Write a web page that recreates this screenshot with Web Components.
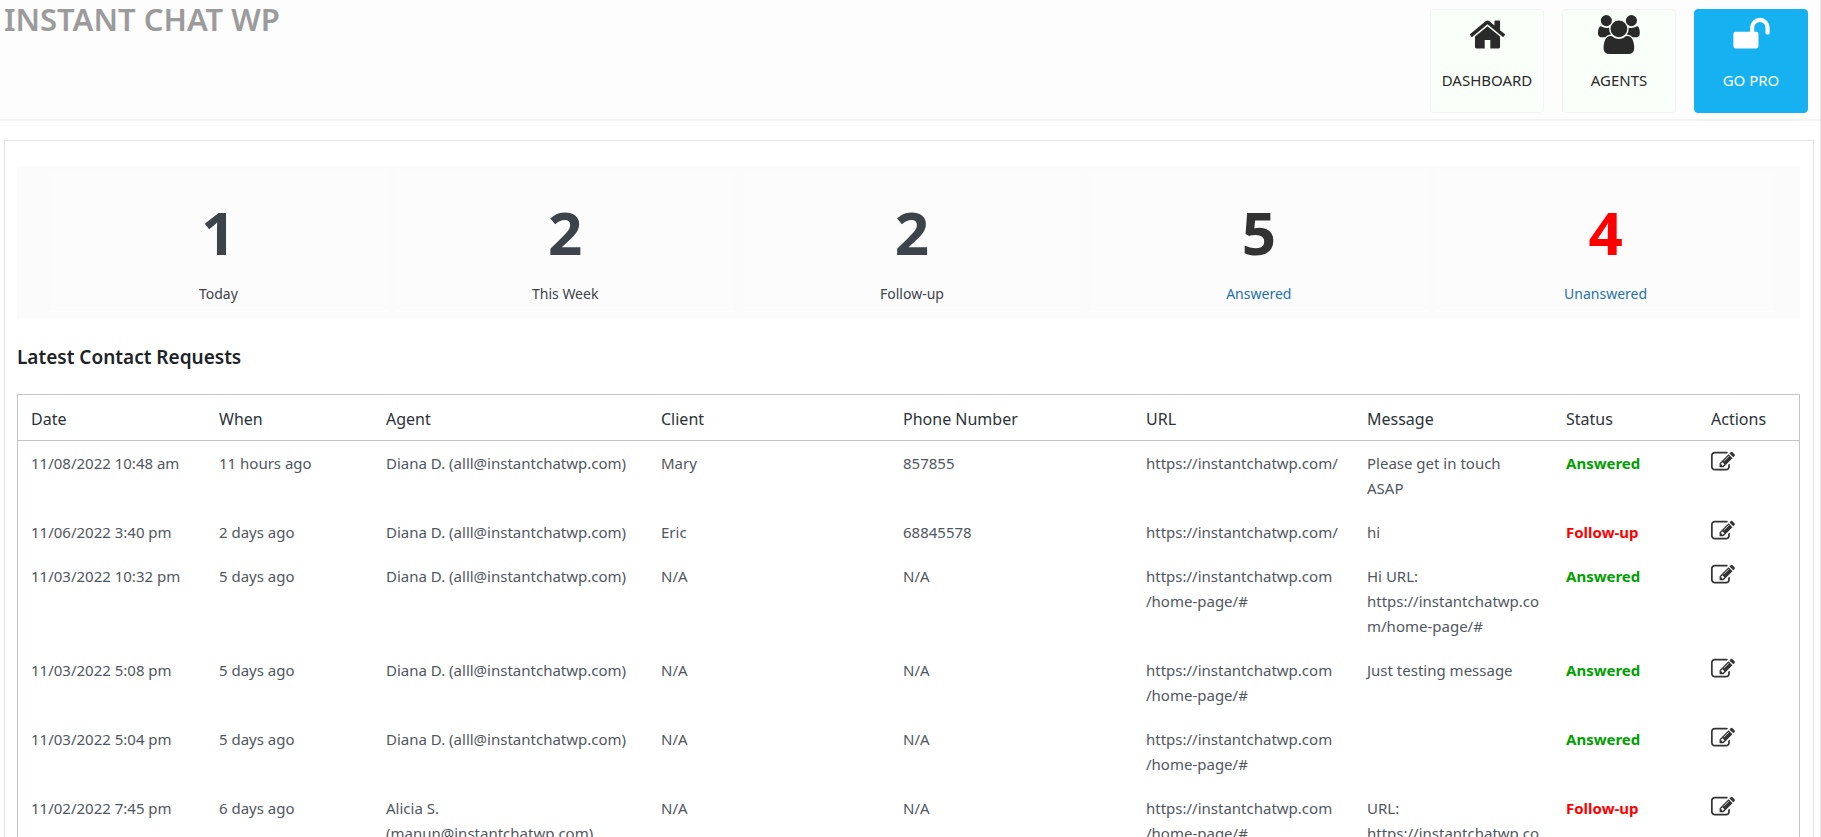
<!DOCTYPE html>
<html lang="en">
<head>
<meta charset="utf-8">
<title>Instant Chat WP</title>
<style>
    body {
        margin: 0;
        background: #fff;
        font-family: "Noto Sans", "Open Sans", sans-serif;
        font-size: 15px;
        color: #50575e;
    }
</style>
</head>
<body>
<chat-page>
    <chat-header slot="header" brand="INSTANT CHAT WP">
        <chat-nav-item icon="home">DASHBOARD</chat-nav-item>
        <chat-nav-item icon="users">AGENTS</chat-nav-item>
        <chat-nav-item icon="unlock" pro>GO PRO</chat-nav-item>
    </chat-header>
    <chat-stats>
        <chat-stat value="1">Today</chat-stat>
        <chat-stat value="2">This Week</chat-stat>
        <chat-stat value="2">Follow-up</chat-stat>
        <chat-stat value="5" link>Answered</chat-stat>
        <chat-stat value="4" link alert>Unanswered</chat-stat>
    </chat-stats>
    <chat-requests heading="Latest Contact Requests"></chat-requests>
</chat-page>

<script>
"use strict";

// icon outlines, each drawn on a 1792 unit high grid
const icons = {
    home: {
        width: 1792,
        path: "M1472 992v480q0 26-19 45t-45 19h-384v-384h-256v384h-384q-26 0-45-19t-19-45v-480q0-1 .5-3t.5-3l575-474 575 474q1 2 1 6zm223-69l-62 74q-8 9-21 11h-3q-13 0-21-7l-692-577-692 577q-12 8-24 7-13-2-21-11l-62-74q-8-10-7-23.5t11-21.5l719-599q32-26 76-26t76 26l244 204v-195q0-14 9-23t23-9h192q14 0 23 9t9 23v408l219 182q10 8 11 21.5t-7 23.5z"
    },
    users: {
        width: 1920,
        path: "M593 896q-162 5-265 128h-134q-82 0-138-40.5t-56-118.5q0-353 124-353 6 0 43.5 21t97.5 42.5 119 21.5q67 0 133-23-5 37-5 66 0 139 81 256zm1071 637q0 120-73 189.5t-194 69.5h-874q-121 0-194-69.5t-73-189.5q0-53 3.5-103.5t14-109 26.5-108.5 43-97.5 62-81 85.5-53.5 111.5-20q10 0 43 21.5t73 48 107 48 135 21.5 135-21.5 107-48 73-48 43-21.5q61 0 111.5 20t85.5 53.5 62 81 43 97.5 26.5 108.5 14 109 3.5 103.5zm-1024-1277q0 106-75 181t-181 75-181-75-75-181 75-181 181-75 181 75 75 181zm704 384q0 159-112.5 271.5t-271.5 112.5-271.5-112.5-112.5-271.5 112.5-271.5 271.5-112.5 271.5 112.5 112.5 271.5zm576 225q0 78-56 118.5t-138 40.5h-134q-103-123-265-128 81-117 81-256 0-29-5-66 66 23 133 23 59 0 119-21.5t97.5-42.5 43.5-21q124 0 124 353zm-128-609q0 106-75 181t-181 75-181-75-75-181 75-181 181-75 181 75 75 181z"
    },
    unlock: {
        width: 1792,
        path: "M1728 576v256q0 26-19 45t-45 19h-64q-26 0-45-19t-19-45v-256q0-106-75-181t-181-75-181 75-75 181v192h96q40 0 68 28t28 68v576q0 40-28 68t-68 28h-960q-40 0-68-28t-28-68v-576q0-40 28-68t68-28h672v-192q0-185 131.5-316.5t316.5-131.5 316.5 131.5 131.5 316.5z"
    },
    edit: {
        width: 1792,
        path: "M888 1184l116-116-152-152-116 116v56h96v96h56zm440-720q-16-16-33 1l-350 350q-17 17-1 33t33-1l350-350q17-17 1-33zm80 594v190q0 119-84.5 203.5t-203.5 84.5h-832q-119 0-203.5-84.5t-84.5-203.5v-832q0-119 84.5-203.5t203.5-84.5h832q63 0 117 25 15 7 18 23 3 17-9 29l-49 49q-14 14-32 8-23-6-45-6h-832q-66 0-113 47t-47 113v832q0 66 47 113t113 47h832q66 0 113-47t47-113v-126q0-13 9-22l64-64q15-15 35-7t20 29zm-96-738l288 288-672 672h-288v-288zm444 132l-92 92-288-288 92-92q28-28 68-28t68 28l152 152q28 28 28 68t-28 68z"
    }
};

function icon(name) {
    const { width, path } = icons[name];
    return `<svg viewBox="0 0 ${width} 1792" fill="currentColor" aria-hidden="true"><path d="${path}"/></svg>`;
}

const agent = "Diana D. (alll@instantchatwp.com)";
const site = "https://instantchatwp.com/";
const homePage = "https://instantchatwp.com\n/home-page/#";
const wrappedUrl = "https://instantchatwp.co\nm/home-page/#";

// column name and its share of the table width
const columns = [
    ["Date", 188],
    ["When", 167],
    ["Agent", 275],
    ["Client", 242],
    ["Phone Number", 243],
    ["URL", 221],
    ["Message", 199],
    ["Status", 145],
    ["Actions", 101]
];

const requests = [
    ["11/08/2022 10:48 am", "11 hours ago", agent, "Mary", "857855", site, "Please get in touch\nASAP", "Answered"],
    ["11/06/2022 3:40 pm", "2 days ago", agent, "Eric", "68845578", site, "hi", "Follow-up"],
    ["11/03/2022 10:32 pm", "5 days ago", agent, "N/A", "N/A", homePage, "Hi URL:\n" + wrappedUrl, "Answered"],
    ["11/03/2022 5:08 pm", "5 days ago", agent, "N/A", "N/A", homePage, "Just testing message", "Answered"],
    ["11/03/2022 5:04 pm", "5 days ago", agent, "N/A", "N/A", homePage, "", "Answered"],
    ["11/02/2022 7:45 pm", "6 days ago", "Alicia S.\n(manun@instantchatwp.com)", "N/A", "N/A", homePage, "URL:\n" + wrappedUrl, "Follow-up"]
];

/**
 * The page frame: the header on top, everything else in the bordered panel.
 */
class ChatPage extends HTMLElement {
    constructor() {
        super();
        this.attachShadow({ mode: "open" });
        this.shadowRoot.innerHTML = `
            <style>
                :host {
                    display: flex;
                    flex-direction: column;
                    box-sizing: border-box;
                    height: 100vh;
                    overflow: auto;
                    scrollbar-width: none;
                    border-right: 1px solid #ececec;
                }
                main {
                    flex: 1 0 auto;
                    margin: 19px 6px 0 4px;
                    padding: 25px 13px 0 12px;
                    border: 1px solid #e3e3e3;
                    border-bottom: 0;
                }
            </style>
            <slot name="header"></slot>
            <main><slot></slot></main>
        `;
    }
}
customElements.define("chat-page", ChatPage);

class ChatHeader extends HTMLElement {
    constructor() {
        super();
        this.attachShadow({ mode: "open" });
        this.shadowRoot.innerHTML = `
            <style>
                :host {
                    display: block;
                }
                header {
                    display: flex;
                    justify-content: space-between;
                    padding: 9px 12px 6px 4px;
                    background: #fdfdfd;
                    border-bottom: 2px solid #f2f2f2;
                }
                h1 {
                    margin: 0;
                    font-size: 31px;
                    font-weight: 600;
                    line-height: 20px;
                    color: #9b9b9b;
                }
                nav {
                    display: flex;
                    gap: 18px;
                }
            </style>
            <header>
                <h1></h1>
                <nav><slot></slot></nav>
            </header>
        `;
    }
    connectedCallback() {
        this.shadowRoot.querySelector("h1").textContent = this.getAttribute("brand");
    }
}
customElements.define("chat-header", ChatHeader);

class ChatNavItem extends HTMLElement {
    constructor() {
        super();
        this.attachShadow({ mode: "open" });
        this.shadowRoot.innerHTML = `
            <style>
                :host {
                    display: block;
                }
                a {
                    display: flex;
                    flex-direction: column;
                    align-items: center;
                    gap: 15px;
                    box-sizing: border-box;
                    width: 114px;
                    height: 104px;
                    padding-top: 5px;
                    border: 1px solid #f3f3f3;
                    border-radius: 4px;
                    background: #f9fff9;
                    color: #2a2a2a;
                    line-height: 22px;
                    text-decoration: none;
                }
                :host([pro]) a {
                    border-color: #16b1f0;
                    background: #16b1f0;
                    color: #fff;
                }
                svg {
                    height: 39px;
                }
            </style>
            <a href="#"><slot></slot></a>
        `;
    }
    connectedCallback() {
        this.shadowRoot.querySelector("a").insertAdjacentHTML("afterbegin", icon(this.getAttribute("icon")));
    }
}
customElements.define("chat-nav-item", ChatNavItem);

class ChatStats extends HTMLElement {
    constructor() {
        super();
        this.attachShadow({ mode: "open" });
        this.shadowRoot.innerHTML = `
            <style>
                :host {
                    display: grid;
                    grid-template-columns: repeat(5, 1fr);
                    gap: 10px;
                    padding: 6px 26px 6px 33px;
                    background: #fbfbfb;
                }
            </style>
            <slot></slot>
        `;
    }
}
customElements.define("chat-stats", ChatStats);

/**
 * One counter. With the link attribute the number and its label are a link.
 */
class ChatStat extends HTMLElement {
    constructor() {
        super();
        this.attachShadow({ mode: "open" });
    }
    connectedCallback() {
        const tag = this.hasAttribute("link") ? "a href='#'" : "div";
        this.shadowRoot.innerHTML = `
            <style>
                :host {
                    display: block;
                    box-sizing: border-box;
                    padding: 20px 0 7px;
                    background: #fcfcfc;
                    border-bottom: 1px solid #fff;
                    font-size: 14px;
                    line-height: 20px;
                    text-align: center;
                    color: #3c434a;
                }
                .box {
                    display: block;
                    color: inherit;
                    text-decoration: none;
                }
                a.box {
                    color: #2271b1;
                }
                strong {
                    display: block;
                    margin-bottom: 12px;
                    font-size: 60px;
                    font-weight: 700;
                    line-height: 80px;
                    color: #3c434a;
                }
                a strong {
                    color: #333;
                }
                :host([alert]) strong {
                    color: #f00;
                }
            </style>
            <${tag} class="box"><strong>${this.getAttribute("value")}</strong><slot></slot></${tag.split(" ")[0]}>
        `;
    }
}
customElements.define("chat-stat", ChatStat);

class ChatRequests extends HTMLElement {
    constructor() {
        super();
        this.attachShadow({ mode: "open" });
    }
    connectedCallback() {
        const total = columns.reduce((sum, column) => sum + column[1], 0);
        this.shadowRoot.innerHTML = `
            <style>
                :host {
                    display: block;
                }
                h2 {
                    margin: 25px 0 23px;
                    font-size: 19px;
                    font-weight: 600;
                    line-height: 28px;
                    color: #1d2327;
                }
                table {
                    width: 100%;
                    table-layout: fixed;
                    border-collapse: separate;
                    border-spacing: 0;
                    border: 1px solid #c3c4c7;
                }
                th {
                    padding: 12px 13px 8px;
                    border-bottom: 1px solid #c3c4c7;
                    font-size: 16px;
                    font-weight: 400;
                    line-height: 25px;
                    text-align: left;
                    color: #2c3338;
                }
                td {
                    padding: 10px 0 9px 13px;
                    line-height: 25px;
                    vertical-align: top;
                    white-space: pre;
                }
                td a {
                    display: block;
                    width: 24px;
                    height: 24px;
                    margin-top: -1px;
                    color: #333;
                }
                td svg {
                    display: block;
                }
                .answered {
                    font-weight: 700;
                    color: #00a000;
                }
                .follow-up {
                    font-weight: 700;
                    color: #f00;
                }
            </style>
            <h2>${this.getAttribute("heading")}</h2>
            <table>
                <colgroup>${columns.map(([, share]) => `<col style="width: ${share / total * 100}%">`).join("")}</colgroup>
                <thead>
                    <tr>${columns.map(([name]) => `<th scope="col">${name}</th>`).join("")}</tr>
                </thead>
                <tbody>${requests.map(this.row).join("")}</tbody>
            </table>
        `;
    }
    row(request) {
        const status = request[request.length - 1];
        const cells = request.slice(0, -1).map(text => `<td>${text}</td>`).join("");
        return `<tr>${cells}<td class="${status.toLowerCase()}">${status}</td>`
            + `<td><a href="#" aria-label="Edit">${icon("edit")}</a></td></tr>`;
    }
}
customElements.define("chat-requests", ChatRequests);
</script>
</body>
</html>
